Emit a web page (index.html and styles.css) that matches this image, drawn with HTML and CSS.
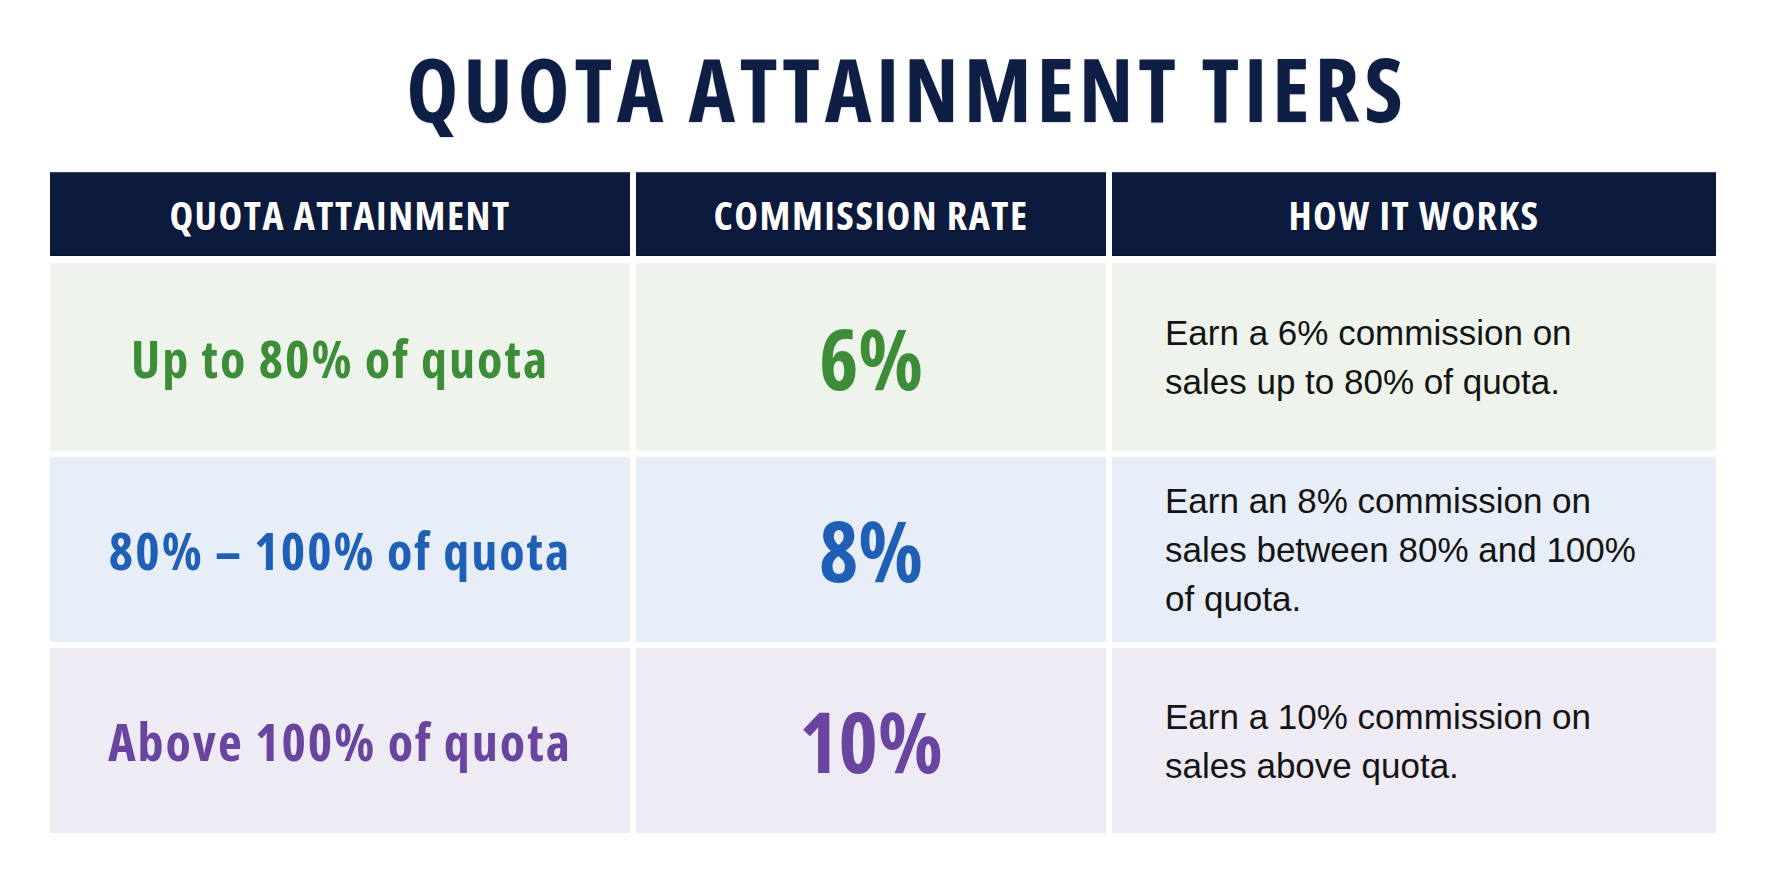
FILE: index.html
```html
<!DOCTYPE html>
<html lang="en">
<head>
<meta charset="utf-8">
<title>Quota Attainment Tiers</title>
<link rel="stylesheet" href="styles.css">
</head>
<body>
<main class="page">
  <h1 class="title">QUOTA ATTAINMENT TIERS</h1>
  <div class="table">
    <div class="th">QUOTA ATTAINMENT</div>
    <div class="th">COMMISSION RATE</div>
    <div class="th">HOW IT WORKS</div>

    <div class="td tier green">Up to 80% of quota</div>
    <div class="td rate green">6%</div>
    <div class="td desc green">Earn a 6% commission on<br>sales up to 80% of quota.</div>

    <div class="td tier blue">80% – 100% of quota</div>
    <div class="td rate blue">8%</div>
    <div class="td desc blue">Earn an 8% commission on<br>sales between 80% and 100%<br>of quota.</div>

    <div class="td tier purple">Above 100% of quota</div>
    <div class="td rate purple">10%</div>
    <div class="td desc purple">Earn a 10% commission on<br>sales above quota.</div>
  </div>
</main>
</body>
</html>
```
FILE: styles.css
```css
html, body {
  margin: 0;
  padding: 0;
  background: #ffffff;
}

.page {
  display: flex;
  flex-direction: column;
  align-items: center;
  padding-top: 44px;
  padding-right: 8px;
}

.title {
  margin: 0 0 40px 48px;
  font-family: "Open Sans", "Liberation Sans", sans-serif;
  font-stretch: 75%;
  font-weight: 700;
  font-size: 88px;
  line-height: 88px;
  letter-spacing: 4.8px;
  color: #0f1e44;
  text-shadow: 0 1px 2px rgba(15, 30, 68, 0.15);
}

.table {
  display: grid;
  grid-template-columns: 580px 470px 604px;
  grid-template-rows: 85px 188px 185px 185px;
  column-gap: 6px;
  row-gap: 6px;
  width: 1666px;
}

.th {
  display: flex;
  align-items: center;
  justify-content: center;
  background: #0b1a3d;
  border-top: 1px solid #3a4766;
  border-bottom: 1px solid #060f26;
  box-sizing: border-box;
  margin-bottom: 1px;
  color: #ffffff;
  font-family: "Open Sans", "Liberation Sans", sans-serif;
  font-stretch: 75%;
  font-weight: 700;
  font-size: 40px;
  letter-spacing: 1.5px;
  text-shadow: 0 1px 1px rgba(0, 0, 0, 0.4);
}

.td {
  display: flex;
  align-items: center;
  white-space: nowrap;
}

.td.green { background: #eef4ec; }
.td.blue { background: #e8eef8; }
.td.purple { background: #efebf4; }

.tier {
  justify-content: center;
  font-family: "Open Sans", "Liberation Sans", sans-serif;
  font-stretch: 75%;
  font-weight: 700;
  font-size: 52px;
  letter-spacing: 2px;
}

.rate {
  justify-content: center;
  font-family: "Open Sans", "Liberation Sans", sans-serif;
  font-stretch: 75%;
  font-weight: 700;
  font-size: 84px;
}

.tier.green, .rate.green { color: #3d8c38; }
.tier.blue, .rate.blue { color: #1f5fb6; }
.tier.purple, .rate.purple { color: #6a45a0; }

.desc {
  padding-left: 53px;
  font-family: "Liberation Sans", "DejaVu Sans", sans-serif;
  font-weight: 400;
  font-size: 35px;
  line-height: 49px;
  color: #141414;
}
```
